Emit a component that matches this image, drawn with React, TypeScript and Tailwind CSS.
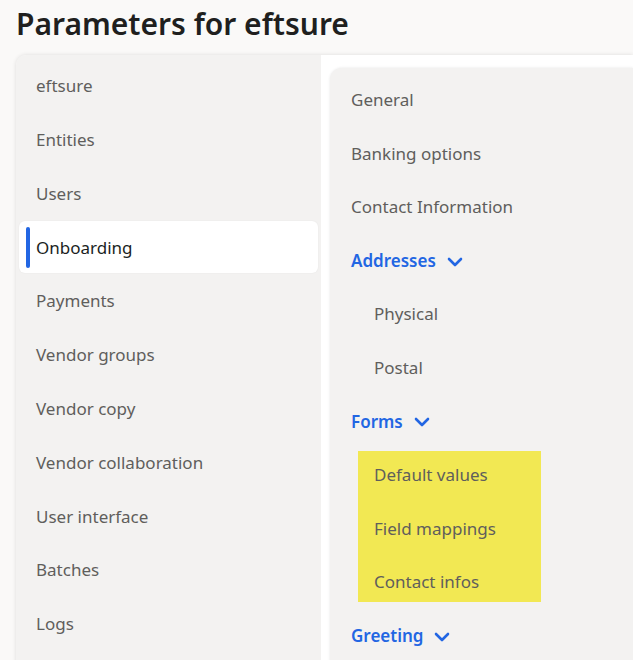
const font = { fontFamily: '"Noto Sans", "Open Sans", Arial, sans-serif' };

const sections = [
  "eftsure",
  "Entities",
  "Users",
  "Onboarding",
  "Payments",
  "Vendor groups",
  "Vendor copy",
  "Vendor collaboration",
  "User interface",
  "Batches",
  "Logs",
];

type Link = { label: string; children?: string[]; highlight?: boolean };

const links: Link[] = [
  { label: "General" },
  { label: "Banking options" },
  { label: "Contact Information" },
  { label: "Addresses", children: ["Physical", "Postal"] },
  { label: "Forms", children: ["Default values", "Field mappings", "Contact infos"], highlight: true },
  { label: "Greeting", children: [] },
];

function Chevron() {
  return (
    <svg width="16" height="10" viewBox="0 0 16 10" fill="none" className="mt-[2px]">
      <path d="M2 2 L8 8 L14 2" stroke="currentColor" strokeWidth="2.6" strokeLinecap="round" strokeLinejoin="round" />
    </svg>
  );
}

function NavItem({ label, active }: { label: string; active?: boolean }) {
  if (active) {
    return (
      <div className="mx-[3px] flex h-[52px] items-center rounded-md bg-white pl-[7px] shadow-[0_0_2px_rgba(0,0,0,0.06)]">
        <span className="h-[41px] w-[4px] rounded-full bg-[#2266e3]" />
        <span className="ml-[6px] text-[17px] text-[#201f1e]">{label}</span>
      </div>
    );
  }
  return (
    <div className="flex h-[52px] items-center pl-[20px] text-[17px] text-[#605e5c]">
      {label}
    </div>
  );
}

function SubLink({ label }: { label: string }) {
  return (
    <div className="flex h-[53.6px] items-center pl-[23px] text-[17px] text-[#605e5c]">
      {label}
    </div>
  );
}

function LinkGroup({ link }: { link: Link }) {
  if (!link.children) {
    return (
      <div className="flex h-[53.6px] items-center text-[17px] text-[#605e5c]">
        {link.label}
      </div>
    );
  }
  return (
    <div>
      <div className="flex h-[53.6px] items-center gap-[11px] text-[17px] font-semibold text-[#2266e3]">
        {link.label}
        <Chevron />
      </div>
      {link.highlight ? (
        <div className="relative">
          {/* marker-style highlight behind the sub links */}
          <div className="absolute top-[3px] bottom-[7px] left-[7px] w-[183px] bg-[#f2e853]" />
          <div className="relative">
            {link.children.map((c) => (
              <SubLink key={c} label={c} />
            ))}
          </div>
        </div>
      ) : (
        link.children.map((c) => <SubLink key={c} label={c} />)
      )}
    </div>
  );
}

export default function App() {
  return (
    <div className="h-[660px] w-[633px] overflow-hidden bg-[#faf9f8]" style={font}>
      <h1 className="pl-[16px] pt-[2px] text-[30px] leading-[43px] font-semibold text-[#201f1e]">
        Parameters for eftsure
      </h1>
      <div className="mt-[10px] ml-[16px] flex h-[700px] overflow-hidden rounded-tl-[10px] shadow-[0_0_4px_rgba(0,0,0,0.12)]">
        <nav className="flex w-[305px] shrink-0 flex-col gap-[1.8px] bg-[#f3f2f1] pt-[5px]">
          {sections.map((s) => (
            <NavItem key={s} label={s} active={s === "Onboarding"} />
          ))}
        </nav>
        <div className="flex-1 bg-white pt-[13px] pl-[9px]">
          <div className="h-full rounded-tl-[12px] bg-[#f3f2f1] pt-[5px] pl-[21px] shadow-[0_0_3px_rgba(0,0,0,0.1)]">
            {links.map((l) => (
              <LinkGroup key={l.label} link={l} />
            ))}
          </div>
        </div>
      </div>
    </div>
  );
}
